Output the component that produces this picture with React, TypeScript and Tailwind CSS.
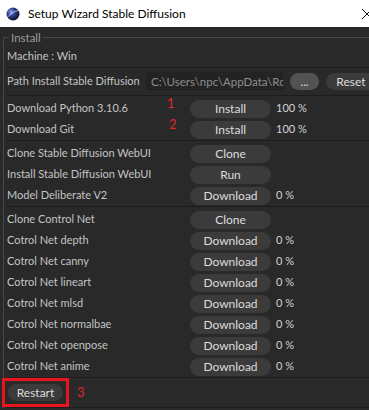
import React from "react";

interface Step {
  label: string;
  action: string;
  progress?: string;
  mark?: string;
}

const GROUPS: Step[][] = [
  [
    { label: "Download Python 3.10.6", action: "Install", progress: "100 %", mark: "1" },
    { label: "Download Git", action: "Install", progress: "100 %", mark: "2" },
  ],
  [
    { label: "Clone Stable Diffusion WebUI", action: "Clone" },
    { label: "Install Stable Diffusion WebUI", action: "Run" },
    { label: "Model Deliberate V2", action: "Download", progress: "0 %" },
  ],
  [
    { label: "Clone Control Net", action: "Clone" },
    { label: "Cotrol Net depth", action: "Download", progress: "0 %" },
    { label: "Cotrol Net canny", action: "Download", progress: "0 %" },
    { label: "Cotrol Net lineart", action: "Download", progress: "0 %" },
    { label: "Cotrol Net mlsd", action: "Download", progress: "0 %" },
    { label: "Cotrol Net normalbae", action: "Download", progress: "0 %" },
    { label: "Cotrol Net openpose", action: "Download", progress: "0 %" },
    { label: "Cotrol Net anime", action: "Download", progress: "0 %" },
  ],
];

const Separator = () => <div className="h-px bg-[#1c1c1c]" />;

const StepRow: React.FC<{ step: Step }> = ({ step }) => (
  <div className="relative flex h-[21px] items-center">
    <span className="w-[183px] shrink-0 whitespace-nowrap text-[#c4c4c4]">{step.label}</span>
    <button className="h-[18px] w-[81px] shrink-0 rounded-full bg-[#3b3b3b] text-[12px] text-[#dcdcdc] leading-none">
      {step.action}
    </button>
    {step.progress && <span className="ml-[5px] text-[#d2d2d2]">{step.progress}</span>}
    {/* red annotation numbers */}
    {step.mark && (
      <span
        className={`absolute top-[-4px] text-[13px] text-[#e4242c] ${
          step.mark === "1" ? "left-[160px]" : "left-[162px]"
        }`}
      >
        {step.mark}
      </span>
    )}
  </div>
);

const LogoIcon = () => (
  <svg width="14" height="14" viewBox="0 0 14 14">
    <defs>
      <radialGradient id="c4d" cx="0.35" cy="0.35" r="0.7">
        <stop offset="0" stopColor="#8fa6e8" />
        <stop offset="0.45" stopColor="#2a3f8c" />
        <stop offset="1" stopColor="#0b1025" />
      </radialGradient>
    </defs>
    <circle cx="7" cy="7" r="6.5" fill="url(#c4d)" />
    <path d="M2.5 9.5 C5 6, 8.5 4, 12.5 3.5" stroke="#dfe6ff" strokeWidth="1" fill="none" opacity="0.7" />
  </svg>
);

export default function App() {
  return (
    <div
      className="flex h-[410px] w-[369px] flex-col overflow-hidden bg-[#292929] text-[11px]"
      style={{ fontFamily: 'Lato, "Noto Sans", sans-serif' }}
    >
      <div className="flex h-[27px] shrink-0 items-center bg-white pl-[6px]">
        <LogoIcon />
        <span className="ml-[8px] text-[12px] text-black">Setup Wizard Stable Diffusion</span>
        <svg className="ml-auto mr-[-4px]" width="12" height="12" viewBox="0 0 12 12">
          <path d="M1 1 L11 11 M11 1 L1 11" stroke="#111" strokeWidth="1" />
        </svg>
      </div>

      <div className="flex-1 pl-[3px] pt-[4px]">
        <fieldset className="border-l border-t border-[#474747] pl-[3px]">
          <legend className="ml-[2px] px-[2px] text-[11.5px] leading-[13px] text-[#9a9a9a]">Install</legend>

          <div className="flex h-[23px] items-center pt-[2px] text-[#c4c4c4]">Machine : Win</div>
          <Separator />

          <div className="flex h-[27px] items-center">
            <span className="w-[139px] shrink-0 whitespace-nowrap text-[#c4c4c4]">Path Install Stable Diffusion</span>
            <div className="flex h-[19px] w-[137px] shrink-0 items-center overflow-hidden whitespace-nowrap bg-[#232323] pl-[5px] text-[11.5px] text-[#8e8e8e]">
              C:\Users\npc\AppData\Ro
            </div>
            <button className="ml-[7px] h-[17px] w-[29px] shrink-0 rounded-full bg-[#535353] text-[#e0e0e0] leading-none">
              ...
            </button>
            <button className="ml-[7px] h-[17px] w-[50px] shrink-0 rounded-full bg-[#3b3b3b] text-[12px] text-[#dcdcdc] leading-none">
              Reset
            </button>
          </div>
          <Separator />

          {GROUPS.map((group, gi) => (
            <React.Fragment key={gi}>
              <div className="pt-[2px]">
                {group.map((s) => (
                  <StepRow key={s.label} step={s} />
                ))}
              </div>
              <Separator />
            </React.Fragment>
          ))}

          <div className="flex items-center">
            <div className="-ml-[5px] border-[3px] border-[#e8141e] p-[3px]">
              <button className="block h-[17px] w-[55px] rounded-full bg-[#3b3b3b] text-[12px] text-[#dcdcdc] leading-none">
                Restart
              </button>
            </div>
            <span className="ml-[8px] text-[13px] text-[#e4242c]">3</span>
          </div>
          <Separator />
        </fieldset>
      </div>
    </div>
  );
}
